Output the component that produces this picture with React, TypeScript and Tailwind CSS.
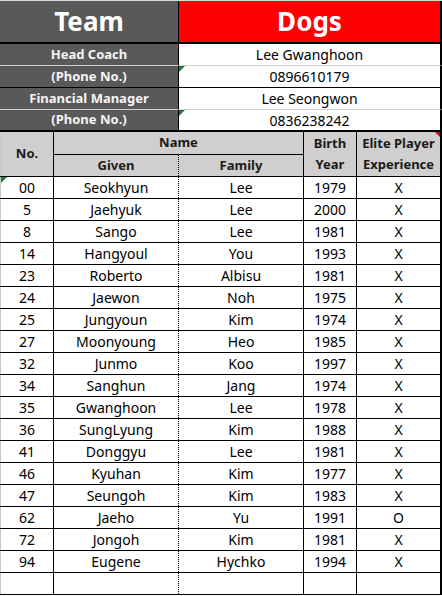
import type { ReactNode } from "react";

const players: [string, string, string, string, string][] = [
  ["00", "Seokhyun", "Lee", "1979", "X"],
  ["5", "Jaehyuk", "Lee", "2000", "X"],
  ["8", "Sango", "Lee", "1981", "X"],
  ["14", "Hangyoul", "You", "1993", "X"],
  ["23", "Roberto", "Albisu", "1981", "X"],
  ["24", "Jaewon", "Noh", "1975", "X"],
  ["25", "Jungyoun", "Kim", "1974", "X"],
  ["27", "Moonyoung", "Heo", "1985", "X"],
  ["32", "Junmo", "Koo", "1997", "X"],
  ["34", "Sanghun", "Jang", "1974", "X"],
  ["35", "Gwanghoon", "Lee", "1978", "X"],
  ["36", "SungLyung", "Kim", "1988", "X"],
  ["41", "Donggyu", "Lee", "1981", "X"],
  ["46", "Kyuhan", "Kim", "1977", "X"],
  ["47", "Seungoh", "Kim", "1983", "X"],
  ["62", "Jaeho", "Yu", "1991", "O"],
  ["72", "Jongoh", "Kim", "1981", "X"],
  ["94", "Eugene", "Hychko", "1994", "X"],
];

function GreenMark() {
  return (
    <span className="absolute left-0 top-0 w-0 h-0 border-t-[6px] border-r-[6px] border-t-[#1f7a3a] border-r-transparent" />
  );
}

function InfoRow({
  label,
  value,
  mark,
  bottom,
}: {
  label: string;
  value: string;
  mark?: boolean;
  bottom: string;
}) {
  return (
    <div className="flex h-[22px]">
      <div className={`w-[179px] bg-[#595959] border-r border-black flex items-center justify-center text-[13px] font-bold text-[#f5f5f5] ${bottom}`}>
        {label}
      </div>
      <div className={`relative flex-1 bg-white border-r-2 border-black flex items-center justify-center text-[14px] text-black ${bottom}`}>
        {mark && <GreenMark />}
        {value}
      </div>
    </div>
  );
}

function Cell({ w, className, children }: { w: string; className?: string; children?: ReactNode }) {
  return <div className={`${w} relative h-full flex items-center justify-center ${className ?? ""}`}>{children}</div>;
}

function DataRow({ row, first }: { row?: [string, string, string, string, string]; first?: boolean }) {
  const [no, given, family, year, elite] = row ?? ["", "", "", "", ""];
  return (
    <div className="flex h-[22px] border-b border-black text-[14px] text-black">
      <Cell w="w-[54px]" className="border-r border-black border-l border-l-[#c8c8c8]">
        {first && <GreenMark />}
        {no}
      </Cell>
      <Cell w="w-[125px]" className="border-r border-dotted border-r-black">{given}</Cell>
      <Cell w="w-[125px]" className="border-r border-black">{family}</Cell>
      <Cell w="w-[53px]" className="border-r border-black">{year}</Cell>
      <Cell w="w-[85px]" className="border-r-2 border-black">{elite}</Cell>
    </div>
  );
}

export default function App() {
  return (
    <div
      className="w-[442px] h-[596px] overflow-hidden bg-white"
      style={{ fontFamily: '"Noto Sans", "Open Sans", sans-serif' }}
    >
      {/* Title */}
      <div className="flex h-[44px] border-b-2 border-black border-t border-t-[#d8d8d8]">
        <div className="w-[179px] bg-[#595959] border-r border-black flex items-center justify-center text-[26px] font-bold text-white">
          Team
        </div>
        <div className="flex-1 bg-[#ff0000] border-r-2 border-black flex items-center justify-center text-[26px] font-bold text-white">
          Dogs
        </div>
      </div>

      {/* Staff */}
      <InfoRow label="Head Coach" value="Lee Gwanghoon" bottom="border-b border-b-[#d0d0d0]" />
      <InfoRow label="(Phone No.)" value="0896610179" mark bottom="border-b border-b-black" />
      <InfoRow label="Financial Manager" value="Lee Seongwon" bottom="border-b border-b-[#d0d0d0]" />
      <InfoRow label="(Phone No.)" value="0836238242" mark bottom="border-b-2 border-b-black" />

      {/* Header */}
      <div className="flex h-[45px] bg-[#d0cece] border-b border-black text-[13px] font-bold text-[#1a1a1a]">
        <div className="w-[54px] border-r border-black border-l border-l-[#c8c8c8] flex items-center justify-center">
          No.
        </div>
        <div className="w-[250px] border-r border-black flex flex-col">
          <div className="h-[23px] border-b border-black flex items-center justify-center">Name</div>
          <div className="flex-1 flex">
            <div className="w-[125px] border-r border-dotted border-r-black flex items-center justify-center">
              Given
            </div>
            <div className="flex-1 flex items-center justify-center">Family</div>
          </div>
        </div>
        <div className="w-[53px] border-r border-black flex flex-col items-center justify-center leading-[21px]">
          <span>Birth</span>
          <span>Year</span>
        </div>
        <div className="relative w-[85px] border-r-2 border-black flex flex-col items-center justify-center leading-[21px]">
          <span className="absolute right-0 top-0 w-0 h-0 border-t-[5px] border-l-[5px] border-t-[#e00000] border-l-transparent" />
          <span>Elite Player</span>
          <span>Experience</span>
        </div>
      </div>

      {/* Players */}
      {players.map((p, i) => (
        <DataRow key={p[0]} row={p} first={i === 0} />
      ))}
      <DataRow />
    </div>
  );
}
